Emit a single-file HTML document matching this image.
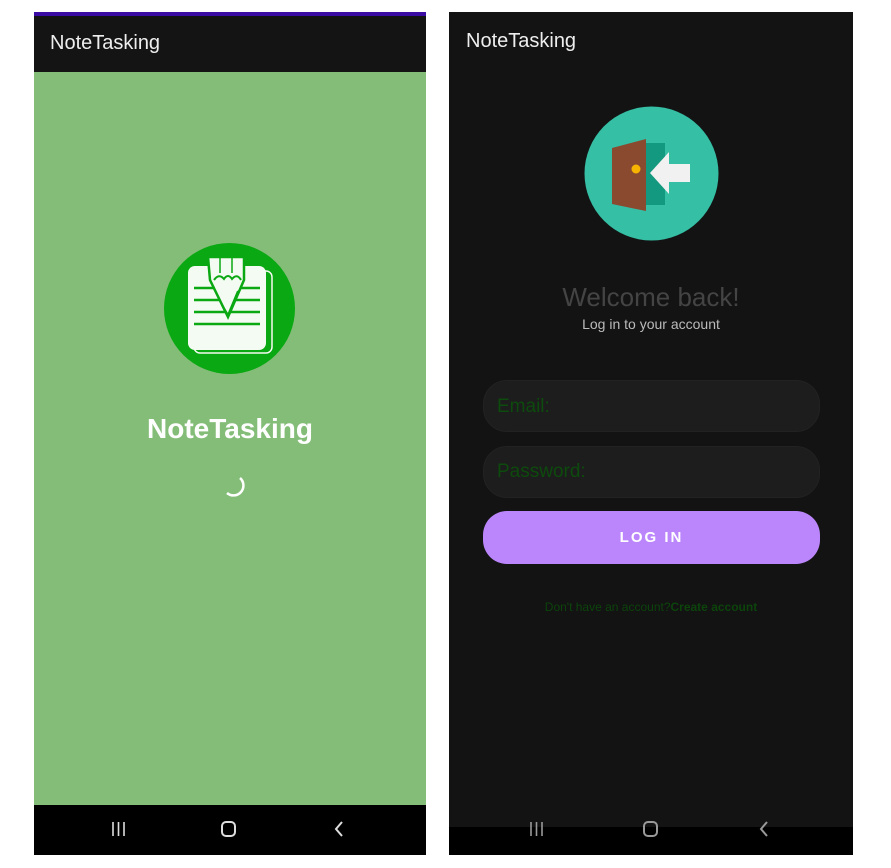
<!DOCTYPE html>
<html><head><meta charset="utf-8"><style>
*{margin:0;padding:0;box-sizing:border-box}
body{width:891px;height:868px;background:#fff;position:relative;overflow:hidden;font-family:"Liberation Sans",sans-serif}
.a{position:absolute}
</style></head><body>
<!-- left panel -->
<div class="a" style="left:34px;top:12px;width:392px;height:4px;background:#3a0ca3"></div>
<div class="a" style="left:34px;top:16px;width:392px;height:56px;background:#141414"></div>
<div class="a" style="left:50px;top:32px;color:#eee;font-size:20px">NoteTasking</div>
<div class="a" style="left:34px;top:72px;width:392px;height:733px;background:#84bd78"></div>
<svg class="a" style="left:164px;top:243px" width="131" height="131" viewBox="0 0 131 131">
<circle cx="65.5" cy="65.5" r="65.5" fill="#0aa812"/>
<rect x="30" y="28" width="78" height="82" rx="6" fill="none" stroke="#f4fbf2" stroke-width="1.5"/>
<rect x="24" y="23" width="78" height="84" rx="7" fill="#f4fbf2"/>
<g stroke="#0aa812" stroke-width="2.5"><line x1="30" y1="45" x2="96" y2="45"/><line x1="30" y1="57" x2="96" y2="57"/><line x1="30" y1="69" x2="96" y2="69"/><line x1="30" y1="81" x2="96" y2="81"/></g>
<path d="M44 14 L80 14 L80 37 L64 74 L46 37 Z" fill="#f4fbf2" stroke="#0aa812" stroke-width="2.5"/>
<path d="M50 37 Q55 30 60 36 Q64 30 68 36 Q73 30 77 37" fill="none" stroke="#0aa812" stroke-width="2"/>
<path d="M58 62 L64 72 L74 48" fill="none" stroke="#0aa812" stroke-width="2"/>
<line x1="56" y1="14" x2="56" y2="30" stroke="#0aa812" stroke-width="1.5"/><line x1="68" y1="14" x2="68" y2="30" stroke="#0aa812" stroke-width="1.5"/>
</svg>
<div class="a" style="left:34px;top:413px;width:392px;text-align:center;color:#fff;font-size:28px;font-weight:bold">NoteTasking</div>
<svg class="a" style="left:219px;top:471px" width="26" height="26"><path d="M21 7 A9 9 0 0 1 8 22" fill="none" stroke="#fff" stroke-width="2.5"/></svg>
<div class="a" style="left:34px;top:805px;width:392px;height:50px;background:#000"></div>
<!-- right panel -->
<div class="a" style="left:449px;top:12px;width:404px;height:815px;background:#131313"></div>
<div class="a" style="left:449px;top:827px;width:404px;height:28px;background:#000"></div>
<div class="a" style="left:466px;top:30px;color:#eee;font-size:20px">NoteTasking</div>
<svg class="a" style="left:584px;top:106px" width="135" height="135" viewBox="0 0 135 135">
<circle cx="67.5" cy="67.5" r="67" fill="#35bfa5"/>
<rect x="57" y="37" width="24" height="62" fill="#13997f"/>
<path d="M28 42 L62 33 L62 105 L28 98 Z" fill="#8a4a30"/>
<circle cx="52" cy="63" r="4.5" fill="#f6b400"/>
<path d="M66 67 L85 46 L85 58 L106 58 L106 76 L85 76 L85 88 Z" fill="#f1f1f1"/>
</svg>
<div class="a" style="left:449px;top:282px;width:404px;text-align:center;color:#444;font-size:26px">Welcome back!</div>
<div class="a" style="left:449px;top:316px;width:404px;text-align:center;color:#bbb;font-size:14px">Log in to your account</div>
<div class="a" style="left:483px;top:380px;width:337px;height:52px;border-radius:24px;background:#1d1d1d;border:1px solid #222"></div>
<div class="a" style="left:497px;top:396px;color:#0d4a0d;font-size:19px">Email:</div>
<div class="a" style="left:483px;top:446px;width:337px;height:52px;border-radius:24px;background:#1d1d1d;border:1px solid #222"></div>
<div class="a" style="left:497px;top:461px;color:#0d4a0d;font-size:19px">Password:</div>
<div class="a" style="left:483px;top:511px;width:337px;height:53px;border-radius:24px;background:#bb86fc;color:#fff;text-align:center;line-height:53px;font-size:15px;letter-spacing:2px;font-weight:bold">LOG IN</div>
<div class="a" style="left:449px;top:600px;width:404px;text-align:center;color:#0c440c;font-size:12px">Don't have an account?<b>Create account</b></div>
<!-- nav icons -->
<svg class="a" style="left:111px;top:821px" width="16" height="16"><g stroke="#ddd" stroke-width="1.6"><line x1="2" y1="1" x2="2" y2="15"/><line x1="7.5" y1="1" x2="7.5" y2="15"/><line x1="13" y1="1" x2="13" y2="15"/></g></svg>
<div class="a" style="left:221px;top:821px;width:15px;height:16px;border:2px solid #ddd;border-radius:5px"></div>
<svg class="a" style="left:333px;top:820px" width="12" height="18"><path d="M9 2 L3 9 L9 16" fill="none" stroke="#ddd" stroke-width="2"/></svg>
<svg class="a" style="left:529px;top:821px" width="16" height="16"><g stroke="#999" stroke-width="1.6"><line x1="2" y1="1" x2="2" y2="15"/><line x1="7.5" y1="1" x2="7.5" y2="15"/><line x1="13" y1="1" x2="13" y2="15"/></g></svg>
<div class="a" style="left:643px;top:821px;width:15px;height:16px;border:2px solid #999;border-radius:5px"></div>
<svg class="a" style="left:758px;top:820px" width="12" height="18"><path d="M9 2 L3 9 L9 16" fill="none" stroke="#999" stroke-width="2"/></svg>
</body></html>
